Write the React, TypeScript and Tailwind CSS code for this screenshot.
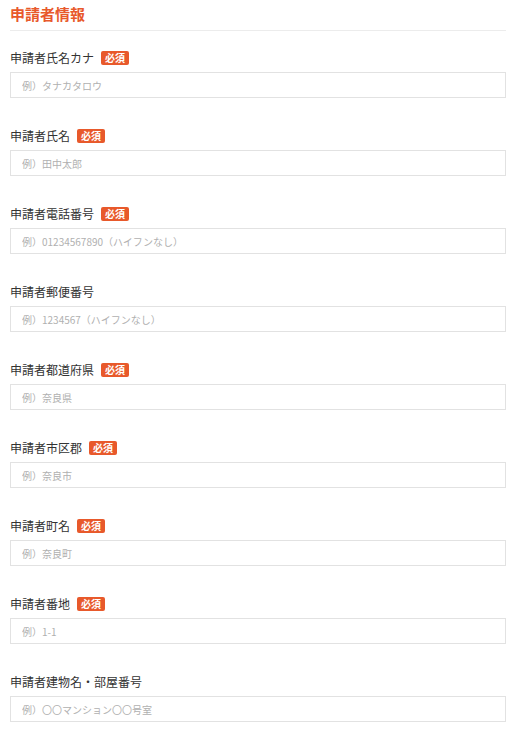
import React from 'react';

interface Field {
  label: string;
  placeholder: string;
  required: boolean;
}

const fields: Field[] = [
  { label: '申請者氏名カナ', placeholder: '例）タナカタロウ', required: true },
  { label: '申請者氏名', placeholder: '例）田中太郎', required: true },
  { label: '申請者電話番号', placeholder: '例）01234567890（ハイフンなし）', required: true },
  { label: '申請者郵便番号', placeholder: '例）1234567（ハイフンなし）', required: false },
  { label: '申請者都道府県', placeholder: '例）奈良県', required: true },
  { label: '申請者市区郡', placeholder: '例）奈良市', required: true },
  { label: '申請者町名', placeholder: '例）奈良町', required: true },
  { label: '申請者番地', placeholder: '例）1-1', required: true },
  { label: '申請者建物名・部屋番号', placeholder: '例）〇〇マンション〇〇号室', required: false },
];

export default function App() {
  return (
    <div
      className="bg-white min-h-[740px] pl-[10px] pr-[4px] pt-[4px]"
      style={{ fontFamily: '"Noto Sans CJK JP", "Noto Sans", sans-serif' }}
    >
      {/* Section header */}
      <div className="border-b border-[#ececec] pb-[6px]">
        <h2 className="text-[15px] leading-[20px] font-bold text-[#e8592b]">申請者情報</h2>
      </div>

      <div className="mt-[19px] flex flex-col gap-[30px]">
        {fields.map((f) => (
          <div key={f.label}>
            <div className="flex items-center h-[16px] gap-[7px]">
              <span className="text-[12px] leading-[16px] text-[#333]">{f.label}</span>
              {f.required && (
                <span className="inline-flex items-center justify-center h-[14px] w-[28px] rounded-[2px] bg-[#e8592b] text-white text-[10px] font-bold leading-none">
                  必須
                </span>
              )}
            </div>
            <input
              type="text"
              placeholder={f.placeholder}
              className="mt-[6px] block w-full h-[26px] border border-[#e2e2e2] bg-white px-[11px] text-[10px] text-[#333] placeholder:text-[#b0b0b0] outline-none"
            />
          </div>
        ))}
      </div>
    </div>
  );
}
